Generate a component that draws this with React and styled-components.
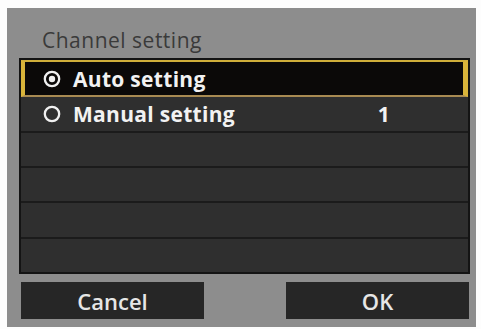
import styled, { createGlobalStyle } from 'styled-components';

const Global = createGlobalStyle`
	html, body {
		margin: 0;
		padding: 0;
		background: #ffffff;
	}
	body {
		font-family: "Open Sans", "DejaVu Sans", sans-serif;
	}
`;

const Page = styled.div`
	width: 481px;
	height: 329px;
	box-sizing: border-box;
	padding: 8px 5px 2px 7px;
	background: #fdfdfd;
`;

const Panel = styled.div`
	height: 100%;
	box-sizing: border-box;
	background: #8d8d8d;
	padding: 0 6px 8px 12px;
	display: flex;
	flex-direction: column;
`;

const Title = styled.div`
	height: 50px;
	box-sizing: border-box;
	display: flex;
	align-items: flex-end;
	padding: 0 0 5px 23px;
	font-size: 21px;
	line-height: 26px;
	color: #3a3a3a;
	letter-spacing: 0.5px;
`;

const List = styled.div`
	height: 216px;
	box-sizing: border-box;
	border: 2px solid #141414;
	background: #2f2f2f;
	display: flex;
	flex-direction: column;
`;

const Row = styled.div`
	flex: 1;
	display: flex;
	align-items: center;
	box-sizing: border-box;
	padding: 0 78px 0 ${(p) => (p.$active ? '18px' : '22px')};
	border-bottom: 2px solid #1b1b1b;
	color: #f2f2f2;
	font-weight: 700;
	font-size: 21px;
	letter-spacing: 0.3px;
	${(p) =>
		p.$active &&
		`
		background: #0b0908;
		border-top: 2px solid #cfae3a;
		border-bottom: 2px solid #a88a52;
		border-left: 4px solid #d9b43a;
		border-right: 5px solid #d9b43a;
	`}
	&:last-child {
		border-bottom: none;
	}
`;

const Label = styled.span`
	margin-left: 12px;
	flex: 1;
`;

const Value = styled.span`
	font-weight: 700;
`;

const Buttons = styled.div`
	margin-top: 8px;
	height: 37px;
	display: flex;
	justify-content: space-between;
	padding: 0 1px 0 2px;
`;

const Button = styled.button`
	width: 183px;
	height: 100%;
	border: none;
	background: #262626;
	color: #e6e6e6;
	font-family: "Open Sans", "DejaVu Sans", sans-serif;
	font-size: 22px;
	font-weight: 600;
	padding: 0;
`;

function Radio({ checked }) {
	return (
		<svg width="18" height="18" viewBox="0 0 18 18">
			<circle cx="9" cy="9" r="7.2" fill="none" stroke="#f0f0f0" strokeWidth="2.3" />
			{checked && <circle cx="9" cy="9" r="3.2" fill="#f0f0f0" />}
		</svg>
	);
}

export default function App() {
	return (
		<Page>
			<Global />
			<Panel>
				<Title>Channel setting</Title>
				<List>
					<Row $active>
						<Radio checked />
						<Label>Auto setting</Label>
					</Row>
					<Row>
						<Radio />
						<Label>Manual setting</Label>
						<Value>1</Value>
					</Row>
					<Row />
					<Row />
					<Row />
					<Row />
				</List>
				<Buttons>
					<Button>Cancel</Button>
					<Button>OK</Button>
				</Buttons>
			</Panel>
		</Page>
	);
}
